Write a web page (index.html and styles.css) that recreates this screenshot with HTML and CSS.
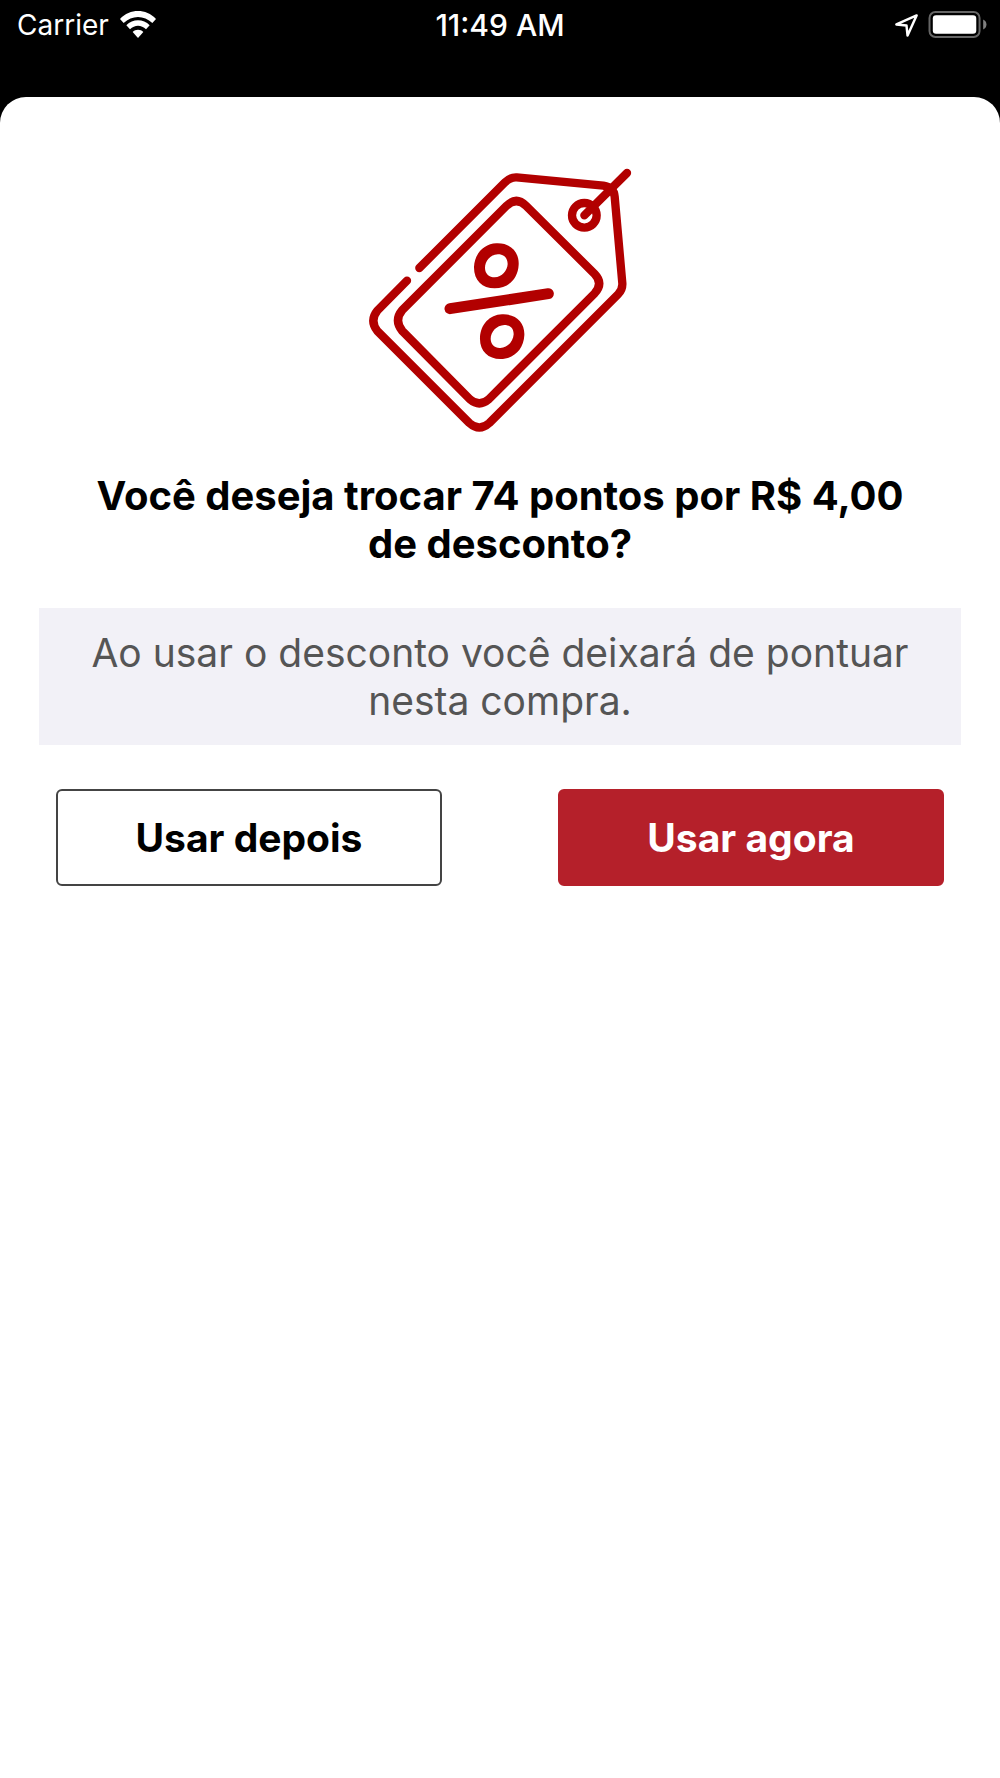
FILE: index.html
```html
<!DOCTYPE html>
<html lang="pt-BR">
<head>
<meta charset="utf-8">
<meta name="viewport" content="width=device-width, initial-scale=1">
<title>Trocar pontos</title>
<link rel="stylesheet" href="styles.css">
</head>
<body>
<header class="status">
  <div class="status-left">
    <span class="carrier">Carrier</span>
    <svg class="wifi" viewBox="0 0 108 81" aria-hidden="true">
      <path d="M0 24C30-8 78-8 108 24L97 36C72 12 36 12 11 36Z"/>
      <path d="M19 43C38 23 70 23 89 43L78 55C64 41 44 41 30 55Z"/>
      <path d="M38 63C46 54 62 54 70 63L54 81Z"/>
    </svg>
  </div>
  <time class="clock">11:49 AM</time>
  <div class="status-right">
    <svg class="arrow" viewBox="0 0 66 66" aria-hidden="true">
      <path d="M62 4L4 30L33 33L36 62Z"/>
    </svg>
    <svg class="battery" viewBox="0 0 176 82" aria-hidden="true">
      <rect class="shell" x="3" y="3" width="152" height="76" rx="18"/>
      <rect class="charge" x="13" y="13" width="132" height="56" rx="10"/>
      <path class="cap" d="M166 26Q176 31 176 41T166 56Z"/>
    </svg>
  </div>
</header>
<main class="sheet">
  <svg class="tag" viewBox="0 0 900 900" aria-hidden="true">
    <g class="line">
      <path d="M208 354L464 98Q480 81 500 82L760 107Q792 112 794 140L817 400Q818 419 804 433L418 819Q388 846 358 819L82 543Q58 512 82 482L171 392"/>
      <path d="M470 167Q499 139 528 167L734 372Q761 400 734 430L416 748Q388 772 360 748L157 543Q131 511 157 480Z"/>
      <circle cx="703" cy="196" r="37"/>
      <path d="M703 196L831 69"/>
    </g>
    <path class="bar" d="M300 476L595 431"/>
    <path class="ring" d="M439 280C481 278 508 306 506 344C504 386 475 415 434 415C396 415 371 390 372 350C374 311 402 281 439 280ZM444 313C420 314 405 334 405 354C405 372 418 382 434 382C456 381 472 362 473 342C473 324 462 313 444 313Z"/>
    <path class="ring" d="M456 493C498 491 525 518 523 556C521 598 492 627 451 627C414 627 388 602 390 562C392 524 419 494 456 493ZM463 525C440 526 422 545 422 567C423 584 434 595 451 594C473 593 490 574 491 553C491 535 480 525 463 525Z"/>
  </svg>
  <h1 class="title">Você deseja trocar 74 pontos por R$ 4,00 de desconto?</h1>
  <p class="note">Ao usar o desconto você deixará de pontuar nesta compra.</p>
  <div class="actions">
    <button class="button" type="button">Usar depois</button>
    <button class="button primary" type="button">Usar agora</button>
  </div>
</main>
</body>
</html>
```
FILE: styles.css
```css
* {
  box-sizing: border-box;
}

body {
  margin: 0;
  min-height: 100vh;
  display: flex;
  flex-direction: column;
  background: #000;
  font-family: Inter, "Liberation Sans", sans-serif;
}

.status {
  height: 97px;
  padding: 9px 13px 0;
  display: grid;
  grid-template-columns: 1fr auto 1fr;
  align-items: start;
  color: #fff;
  font-size: 28px;
  line-height: 33px;
}

.status-left,
.status-right {
  display: flex;
  align-items: center;
  height: 32px;
}

.status-left {
  padding-left: 4px;
  gap: 11px;
}

.status-right {
  justify-content: flex-end;
  gap: 10px;
}

.clock {
  font-size: 30px;
  font-weight: 500;
}

.wifi {
  width: 36px;
  height: 27px;
  margin-bottom: 2px;
  fill: #fff;
}

.arrow {
  width: 23px;
  height: 23px;
  fill: none;
  stroke: #fff;
  stroke-width: 7;
  stroke-linejoin: round;
}

.battery {
  width: 59px;
  height: 27px;
  margin-bottom: 2px;
}

.shell {
  fill: none;
  stroke: #666;
  stroke-width: 6;
}

.charge {
  fill: #fff;
}

.cap {
  fill: #808080;
}

.sheet {
  flex: 1;
  padding: 53px 39px 0;
  display: flex;
  flex-direction: column;
  background: #fff;
  border-radius: 26px 26px 0 0;
}

.tag {
  width: 300px;
  height: 300px;
  align-self: center;
  fill: none;
  stroke: #b20000;
  stroke-linecap: round;
  stroke-linejoin: round;
}

.line {
  stroke-width: 25;
}

.bar {
  stroke-width: 33;
}

.ring {
  fill: #b20000;
  stroke: none;
}

.title,
.note {
  line-height: 48px;
  text-align: center;
}

.title {
  margin: 22px 0 40px;
  padding: 0 40px;
  font-size: 40px;
  font-weight: 700;
  color: #000;
}

.note {
  margin: 0;
  padding: 21px 40px 20px;
  background: #f2f1f7;
  color: #555;
  font-size: 39px;
}

.actions {
  margin-top: 44px;
  padding: 0 17px;
  display: grid;
  grid-template-columns: 1fr 1fr;
  gap: 116px;
}

.button {
  height: 97px;
  padding: 0;
  border: 2px solid #444;
  border-radius: 6px;
  background: #fff;
  color: #000;
  font-family: inherit;
  font-size: 39px;
  font-weight: 700;
}

.primary {
  border-color: #b5202a;
  background: #b5202a;
  color: #fff;
}
```
